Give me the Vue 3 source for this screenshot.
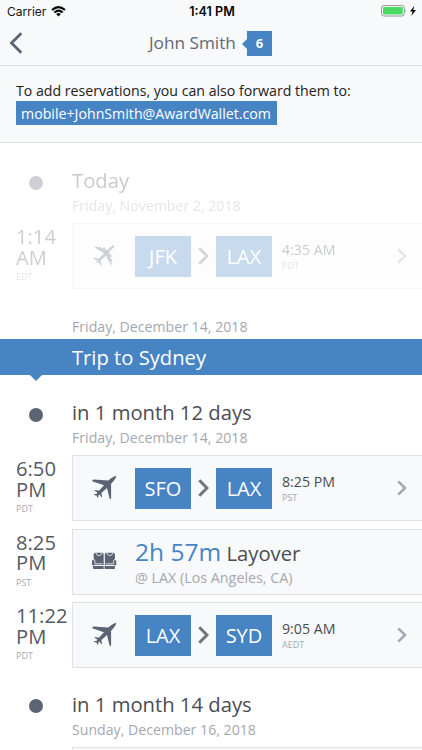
<script setup>
const past = [
  { kind: 'flight', time: '1:14 AM', zone: 'EDT', from: 'JFK', to: 'LAX', arrival: '4:35 AM', arrivalZone: 'PDT' },
]
const trip = [
  { kind: 'flight', time: '6:50 PM', zone: 'PDT', from: 'SFO', to: 'LAX', arrival: '8:25 PM', arrivalZone: 'PST' },
  { kind: 'layover', time: '8:25 PM', zone: 'PST', duration: '2h 57m', place: '@ LAX (Los Angeles, CA)' },
  { kind: 'flight', time: '11:22 PM', zone: 'PDT', from: 'LAX', to: 'SYD', arrival: '9:05 AM', arrivalZone: 'AEDT' },
]
const groups = [
  { title: 'Today', date: 'Friday, November 2, 2018', items: past, faded: true },
  { title: 'in 1 month 12 days', date: 'Friday, December 14, 2018', items: trip, banner: 'Trip to Sydney' },
  { title: 'in 1 month 14 days', date: 'Sunday, December 16, 2018', items: [] },
]
</script>

<template>
  <div class="screen">
    <header>
      <div class="status">
        <div class="carrier">
          <span>Carrier</span>
          <svg width="15" height="11" viewBox="0 0 15 11">
            <path d="M1 4.1Q7.5 -1.9 14 4.1" />
            <path d="M3.3 6.5Q7.5 2.8 11.7 6.5" />
            <path class="solid" d="M5.1 8Q7.5 6 9.9 8L7.5 10.5z" />
          </svg>
        </div>
        <b>1:41 PM</b>
        <div class="power">
          <svg width="36" height="12" viewBox="0 0 36 12">
            <rect x=".6" y=".6" width="22.6" height="10.4" rx="2.3" fill="#fff" stroke="#8f9193" />
            <rect x="2" y="2" width="19.8" height="7.6" rx="1" fill="#4cd964" />
            <path d="M24.3 4q1.5 1.8 0 3.6z" fill="#8f9193" />
            <path d="M33.3 .8L29 6.4h2.6L30.3 11l4.7-5.9h-2.8z" fill="#050505" />
          </svg>
        </div>
      </div>
      <div class="nav">
        <svg class="back" width="14" height="22" viewBox="0 0 14 22"><path d="M12.3 1.3L2.5 11L12.3 20.7" /></svg>
        <span class="name">John Smith</span>
        <span class="count">6</span>
      </div>
    </header>

    <section class="info">
      <p>To add reservations, you can also forward them to:</p>
      <span class="mail">mobile+JohnSmith@AwardWallet.com</span>
    </section>

    <main>
      <template v-for="group in groups" :key="group.title">
        <div v-if="group.banner" class="trip">
          <div class="date">{{ group.date }}</div>
          <h1>{{ group.banner }}</h1>
        </div>
        <section class="group" :class="{ faded: group.faded }">
          <div class="day">
            <i class="dot"></i>
            <div>
              <h2>{{ group.title }}</h2>
              <div class="date">{{ group.date }}</div>
            </div>
          </div>
          <div v-for="item in group.items" :key="item.time" class="row">
            <div class="time">
              <span>{{ item.time }}</span>
              <small>{{ item.zone }}</small>
            </div>
            <div v-if="item.kind === 'flight'" class="card">
              <svg class="icon" width="26" height="26" viewBox="0 0 26 26">
                <path v-if="group.faded" d="M22.3 2.2Q20.6 2 18.6 3.9L15.5 7L12.9 6.3L13 4.8L11.7 4.3L11 5.7L9 5.1L8.4 3.9L6.9 3.7L6.6 4.4L3.6 3.6L2.8 4.4L12 10.3L6.8 15.7L2 14.7L1.3 15.4L5.3 17.4L3.8 20L6.8 19L8.9 22.9L9.6 22.2L8.6 17.4L14 12.5L19.1 22.2L19.9 21.4L19.2 18.5L20.4 18L20.5 16.8L18.8 16.1L18.3 14L19.8 13.4L19.7 12.2L17.8 11.4L17.2 8.8L20.8 5.4Q22.5 3.7 22.3 2.2z" />
                <path v-else d="M24.3 .7Q22.3 .8 19.4 3.1L16.2 5.6L1.6 4.6L.1 5.6L.8 6.6L12 10.2L6.9 15.8L3.3 14.9L2.5 15.8L5.3 17.5L4.5 18.9L2.4 19L2 19.9L4.5 20.5L5.5 22.7L6.3 22.4L6.4 20.6L7.7 19.6L9.2 22.3L10.1 21.7L9.4 18L15 12.9L17.5 23.3L18.5 24.2L19.1 23.3L19.1 8.7L21.8 5.7Q24.4 2.6 24.3 .7z" />
              </svg>
              <span class="airport">{{ item.from }}</span>
              <svg class="to" width="11" height="18" viewBox="0 0 11 18"><path d="M1.3 1.3L9 9L1.3 16.7" /></svg>
              <span class="airport">{{ item.to }}</span>
              <div class="arrival">
                <span>{{ item.arrival }}</span>
                <small>{{ item.arrivalZone }}</small>
              </div>
              <svg class="more" width="10" height="16" viewBox="0 0 10 16"><path d="M1.3 1.3L8 8L1.3 14.7" /></svg>
            </div>
            <div v-else class="card">
              <svg class="icon" width="26" height="26" viewBox="0 0 26 26">
                <g v-for="x in [0, 11]" :key="x" :transform="`translate(${x} 0)`">
                  <path d="M2.9 3.7H10.7L11.9 5.2V15.9H1.7V5.2z" />
                  <path class="seam" d="M3.8 3.5Q4.3 6.7 6.8 6.7Q9.4 6.7 9.8 3.5" />
                  <path d="M.9 17H11.9V20H1.9Q.9 20 .9 19z" />
                </g>
                <path d="M0 11.6Q1.2 10.3 2.5 11.6V16.2H0zM21.7 11.6Q23 10.3 24.2 11.6V16.2H21.7z" />
                <path class="seam" d="M1.8 10.4Q2.9 10.6 2.9 12V14.8H10.5M22.8 10.4Q21.6 10.6 21.6 12V14.8H14M12.2 3V21" />
              </svg>
              <div class="layover">
                <div class="length"><em>{{ item.duration }}</em> Layover</div>
                <div class="place">{{ item.place }}</div>
              </div>
            </div>
          </div>
        </section>
      </template>
      <div class="row"><div class="time"></div><div class="card"></div></div>
    </main>
  </div>
</template>

<style>
body { margin: 0; background: #fff; }
</style>

<style scoped>
* { box-sizing: border-box; }
.screen { width: 422px; height: 750px; overflow: hidden; background: #fff; font-family: "Open Sans", sans-serif; color: #4b4d52; }
svg { display: block; flex: none; }
header { height: 66px; background: #f7f9fb; border-bottom: 1px solid #dadde1; }
.status { display: grid; grid-template-columns: 1fr auto 1fr; align-items: center; height: 22px; padding: 0 5px 0 7px; font: 12px Inter, sans-serif; color: #151515; }
.status b { font-weight: 600; font-size: 12.6px; color: #050505; }
.carrier { display: flex; gap: 5px; align-items: center; font-size: 12px; }
.carrier path { fill: none; stroke: #050505; stroke-width: 2; }
.carrier .solid { fill: #050505; stroke: none; }
.power { display: flex; justify-content: flex-end; }
.nav { display: flex; align-items: center; height: 43px; padding-left: 9px; padding-bottom: 1px; }
.back path { fill: none; stroke: #5c6373; stroke-width: 2.8; }
.name { margin-left: 126px; width: 88px; font-size: 17.2px; line-height: 24px; color: #626876; white-space: nowrap; }
.count { position: relative; display: flex; align-items: center; justify-content: center; width: 25px; height: 25px; margin-left: 10px; background: #4684c4; color: #fff; font-size: 13px; font-weight: 700; }
.count::before { content: ""; position: absolute; left: -5px; top: 8px; border: 5px solid transparent; border-left: 0; border-right-color: #4684c4; }
.info { height: 77px; padding: 15px 15px 0 16px; background: #f7f9fb; border-bottom: 1px solid #e0e2e6; }
.info p { margin: 0; height: 20px; line-height: 20px; font-size: 14.15px; color: #222; white-space: nowrap; }
.mail { display: inline-block; width: 261px; height: 24px; padding-left: 5px; background: #4684c4; color: #fff; font-size: 14.2px; line-height: 25px; white-space: nowrap; }
.group { padding-top: 22px; }
.group + .group { padding-top: 13px; }
.faded { opacity: .3; }
.day { display: flex; height: 58px; }
.day > div { width: 350px; }
.dot { flex: none; width: 14px; height: 14px; margin: 10.5px 29px 0; border-radius: 50%; background: #5c6373; }
h2 { margin: 0; height: 32px; font-size: 20.25px; font-weight: 400; line-height: 30px; white-space: nowrap; }
.date { height: 18px; font-size: 14.15px; line-height: 18px; color: #a5a8b1; white-space: nowrap; }
.row { display: flex; height: 66px; margin-bottom: 7.4px; }
.time { display: flex; flex-direction: column; flex: none; width: 72px; padding: 3px 0 0 16px; font-size: 20.2px; line-height: 20.5px; color: #555a66; }
small { font-size: 9px; line-height: 12px; color: #a5a8b1; }
.time small { margin-top: 4px; }
.card { display: flex; align-items: center; flex: 1; height: 66px; border: 1px solid #dfe1e6; border-right: 0; border-width: 1.5px 0 1.5px 1px; background: #f7f9fb; }
.icon { margin-left: 19px; fill: #5c6373; }
.icon .seam { fill: none; stroke: #f7f9fb; stroke-width: .8; }
.airport { flex: none; width: 56px; height: 41px; background: #4684c4; color: #fff; font-size: 20px; line-height: 41px; text-align: center; }
.icon + .airport { margin-left: 17px; }
.to { margin: 0 7px; }
.to path { fill: none; stroke: #70737a; stroke-width: 3; }
.arrival { display: flex; flex-direction: column; width: 115px; margin-left: 10px; padding-top: 1px; font-size: 14.2px; line-height: 18px; }
.arrival small { line-height: 13px; }
.more path { fill: none; stroke: #a5a8b1; stroke-width: 2.5; }
.layover { margin-left: 17px; padding-top: 3px; }
.length { height: 30px; font-size: 20.3px; line-height: 28px; white-space: nowrap; }
.length em { font-style: normal; font-size: 24.5px; color: #4684c4; }
.place { font-size: 14.3px; line-height: 20px; color: #a5a8b1; white-space: nowrap; }
.trip { padding-top: 22px; }
.trip .date { margin: 0 0 3px 72px; }
h1 { position: relative; margin: 0; height: 36px; padding-left: 72px; background: #4684c4; color: #fff; font-size: 20.2px; font-weight: 400; line-height: 37px; }
h1::after { content: ""; position: absolute; left: 30px; top: 36px; border: 6px solid transparent; border-top-color: #4684c4; border-bottom: 0; }
</style>
